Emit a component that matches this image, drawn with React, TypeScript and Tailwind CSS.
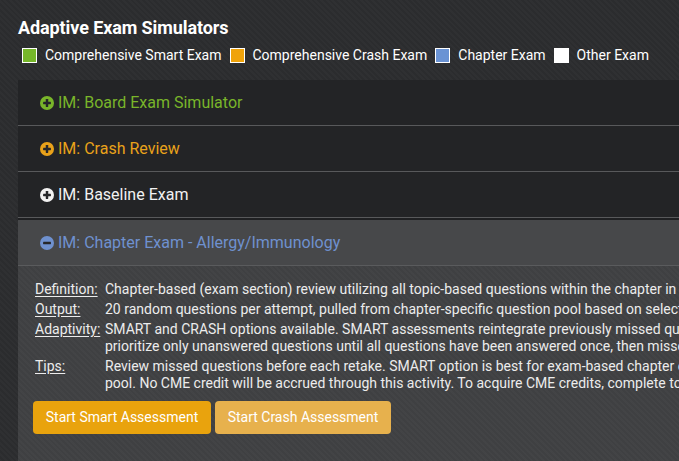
import { ReactNode } from "react"

type Row = { label: string; color: string; open?: boolean }

const rows: Row[] = [
  { label: "IM: Board Exam Simulator", color: "text-[#79b52a]" },
  { label: "IM: Crash Review", color: "text-[#e9a21a]" },
  { label: "IM: Baseline Exam", color: "text-[#f2f2f2]" },
  { label: "IM: Chapter Exam - Allergy/Immunology", color: "text-[#6f91cf]", open: true },
]

const legend = [
  { label: "Comprehensive Smart Exam", bg: "bg-[#76b72a]" },
  { label: "Comprehensive Crash Exam", bg: "bg-[#f0a30a]" },
  { label: "Chapter Exam", bg: "bg-[#6a93d4]" },
  { label: "Other Exam", bg: "bg-white" },
]

function CircleIcon({ open }: { open?: boolean }) {
  return (
    <svg width="14" height="14" viewBox="0 0 16 16" className="shrink-0">
      <circle cx="8" cy="8" r="8" fill="currentColor" />
      <rect x="3.5" y="6.6" width="9" height="2.8" rx="0.5" fill="#26272a" />
      {!open && <rect x="6.6" y="3.5" width="2.8" height="9" rx="0.5" fill="#26272a" />}
    </svg>
  )
}

function Item({ label, children }: { label: string; children: ReactNode }) {
  return (
    <div className="flex mb-[3px]">
      <div className="w-[70px] shrink-0 underline underline-offset-2">{label}</div>
      <div className="whitespace-nowrap">{children}</div>
    </div>
  )
}

export default function App() {
  return (
    <div
      className="w-[679px] h-[461px] overflow-hidden bg-[#2b2c2e] bg-[repeating-linear-gradient(45deg,rgba(255,255,255,0.018)_0px,rgba(255,255,255,0.018)_2px,transparent_2px,transparent_4px)] text-white"
      style={{ fontFamily: "Roboto, 'Noto Sans', sans-serif" }}
    >
      <div className="pl-[18px] pt-[16px]">
        <h1 className="text-[18px] font-bold leading-[24px] tracking-[-0.1px]">Adaptive Exam Simulators</h1>
        <div className="flex items-center gap-[8px] mt-[6px] pl-[4px] text-[14px] leading-[18px] whitespace-nowrap">
          {legend.map((l) => (
            <div key={l.label} className="flex items-center gap-[8px]">
              <span className={`w-[15px] h-[15px] border border-white ${l.bg}`} />
              <span>{l.label}</span>
            </div>
          ))}
        </div>
      </div>

      <div className="ml-[18px] mt-[16px] w-[900px]">
        {rows.map((r) => (
          <div key={r.label}>
            {r.open && <div className="h-[2px] bg-[#1f2022]" />}
            <div
              className={`h-[46px] flex items-center pl-[22px] gap-[4px] text-[16px] ${r.color} ${
                r.open
                  ? "bg-[#47484a] border-b border-[#5a5b5d]"
                  : "bg-[#232426] border-b border-[#58595b]"
              }`}
            >
              <CircleIcon open={r.open} />
              <span>{r.label}</span>
            </div>
          </div>
        ))}

        <div className="bg-[#3f4042] bg-[repeating-linear-gradient(45deg,rgba(255,255,255,0.018)_0px,rgba(255,255,255,0.018)_2px,transparent_2px,transparent_4px)] pl-[17px] pt-[15px] pb-[40px] text-[14px] leading-[17px] text-[#ececec]">
          <Item label="Definition:">
            Chapter-based (exam section) review utilizing all topic-based questions within the chapter in a timed format.
          </Item>
          <Item label="Output:">
            20 random questions per attempt, pulled from chapter-specific question pool based on selected assessment type.
          </Item>
          <Item label="Adaptivity:">
            SMART and CRASH options available. SMART assessments reintegrate previously missed questions into subsequent attempts. CRASH assessments
            <br />
            prioritize only unanswered questions until all questions have been answered once, then missed questions are reintegrated.
          </Item>
          <Item label="Tips:">
            Review missed questions before each retake. SMART option is best for exam-based chapter content review using the full question
            <br />
            pool. No CME credit will be accrued through this activity. To acquire CME credits, complete topic-based quizzes.
          </Item>

          <div className="flex gap-[4px] mt-[9px] -ml-[2px]">
            <button className="h-[33px] w-[178px] rounded-[4px] bg-[#e9a30d] text-white text-[14px]">
              Start Smart Assessment
            </button>
            <button className="h-[33px] w-[176px] rounded-[4px] bg-[#e7b14d] text-white text-[14px]">
              Start Crash Assessment
            </button>
          </div>
        </div>
      </div>
    </div>
  )
}
